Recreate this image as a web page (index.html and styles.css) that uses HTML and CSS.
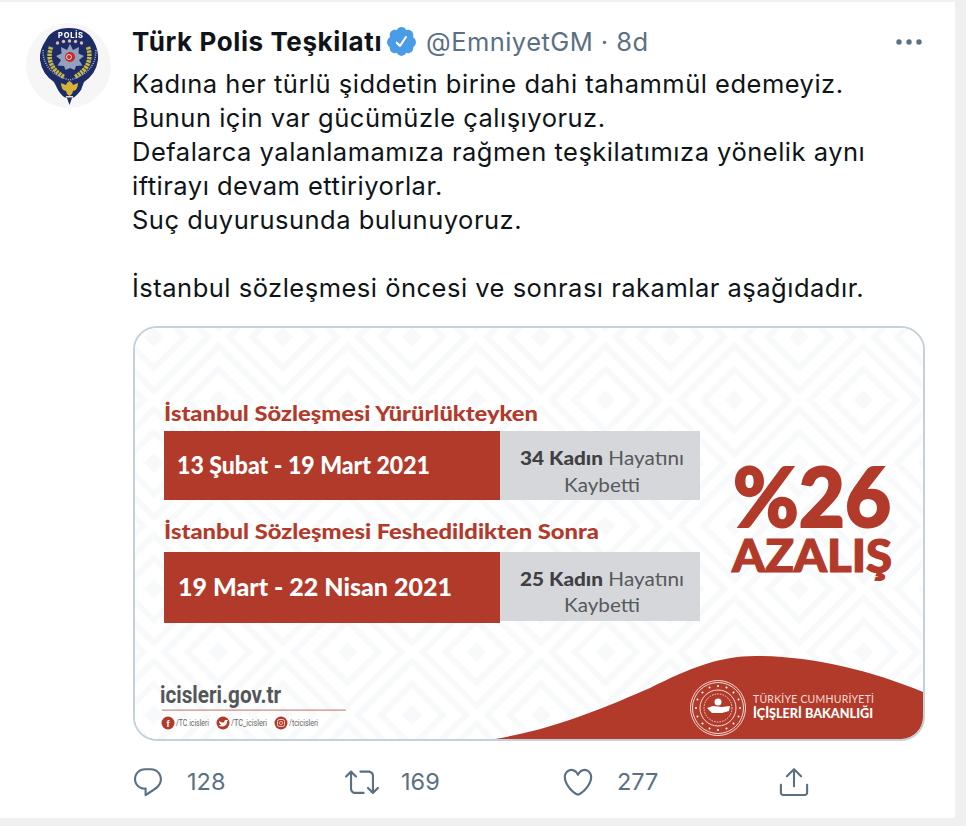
FILE: index.html
```html
<!DOCTYPE html>
<html lang="tr">
<head>
<meta charset="utf-8">
<title>Türk Polis Teşkilatı</title>
<link rel="stylesheet" href="styles.css">
</head>
<body>
<article class="tweet">
  <div class="avatar">
    <svg class="avatar-art" viewBox="26 23 85 85" aria-label="Polis arması">
      <circle cx="68.5" cy="65.5" r="42.5" fill="#f6f6f6"/>
      <path d="M46 40 Q52 28 69 28 Q86 28 93 40 Q99 50 98 60 Q96 74 84 82 L81 90 Q76 97 72 98 L69.500 105 L67 98 Q62 97 58 90 L54 82 Q42 74 40 60 Q39 50 46 40Z" fill="#1d2c66"/>
      <text class="badge-title" x="58" y="37.500" textLength="25" lengthAdjust="spacing">POLİS</text>
      <g fill="#e3b8b0"><circle cx="57.500" cy="43" r="1.700"/><circle cx="63.500" cy="41.500" r="1.700"/><circle cx="69.500" cy="41" r="1.700"/><circle cx="75.500" cy="41.500" r="1.700"/><circle cx="81.500" cy="43" r="1.700"/></g>
      <path d="M51 47 Q45 66 64 77" class="laurel"/>
      <path d="M88 47 Q94 66 75 77" class="laurel"/>
      <path d="M43 50 Q43 73 69.500 80 Q96 73 96 50" class="badge-ring"/>
      <path d="M70 44 L73 50 L79 47 L78.500 53.500 L84 56 L79 60 L82.500 65.500 L76 66 L74.500 70 L70 68 L65.500 70 L64 66 L57.500 65.500 L61 60 L56 56 L61.500 53.500 L61 47 L67 50Z" fill="#93a1bd"/>
      <circle cx="70" cy="57" r="5" fill="#c8262a"/>
      <circle cx="69" cy="57" r="2.500" fill="none" stroke="#fff" stroke-width=".8"/>
      <path d="M69.500 81 Q66 83 66 85 L61 83 Q61 90 66 91 L67 94 L69.500 96 L72 94 L73 91 Q78 90 78 83 L73 85 Q73 83 69.500 81Z" fill="#d6b23a"/>
      <rect x="66" y="96" width="7" height="1.500" fill="#e8e3c8"/>
    </svg>
  </div>
  <div class="content">
    <header class="head">
      <span class="name">Türk Polis Teşkilatı</span>
      <svg class="verified" viewBox="0 0 24 24"><path d="M22.5 12.5c0-1.58-.875-2.95-2.148-3.6.154-.435.238-.905.238-1.4 0-2.21-1.71-3.998-3.818-3.998-.47 0-.92.084-1.336.25C14.818 2.415 13.51 1.5 12 1.5s-2.816.917-3.437 2.25c-.415-.165-.866-.25-1.336-.25-2.11 0-3.818 1.79-3.818 4 0 .494.083.964.237 1.4-1.272.65-2.147 2.018-2.147 3.6 0 1.495.782 2.798 1.942 3.486-.02.17-.032.34-.032.514 0 2.21 1.708 4 3.818 4 .47 0 .92-.086 1.335-.25.62 1.334 1.926 2.25 3.437 2.25 1.512 0 2.818-.916 3.437-2.25.415.163.865.248 1.336.248 2.11 0 3.818-1.79 3.818-4 0-.174-.012-.344-.033-.513 1.158-.687 1.943-1.99 1.943-3.484zm-6.616-3.334l-4.334 6.5c-.145.217-.382.334-.625.334-.143 0-.288-.04-.416-.126l-.115-.094-2.415-2.415c-.293-.293-.293-.768 0-1.06s.768-.294 1.06 0l1.77 1.767 3.825-5.74c.23-.345.696-.436 1.04-.207.346.23.44.696.21 1.04z"/></svg>
      <span class="meta">@EmniyetGM · 8d</span>
      <svg class="more" viewBox="0 0 26 6"><circle cx="3" cy="3" r="2.7"/><circle cx="13" cy="3" r="2.7"/><circle cx="23" cy="3" r="2.7"/></svg>
    </header>
    <p class="text">Kadına her türlü şiddetin birine dahi tahammül edemeyiz.
Bunun için var gücümüzle çalışıyoruz.
Defalarca yalanlamamıza rağmen teşkilatımıza yönelik aynı
iftirayı devam ettiriyorlar.
Suç duyurusunda bulunuyoruz.

İstanbul sözleşmesi öncesi ve sonrası rakamlar aşağıdadır.</p>
    <figure class="media">
      <svg class="media-art" viewBox="135 328 788 411" role="img" aria-label="İstanbul Sözleşmesi öncesi ve sonrası rakamlar">
        <defs>
          <g id="dia">
            <path d="M0 -10 L10 0 L0 10 L-10 0Z" class="dia-fill"/>
            <path d="M0 -31 L31 0 L0 31 L-31 0Z" class="dia-line"/>
            <path d="M0 -54 L54 0 L0 54 L-54 0Z" class="dia-line"/>
          </g>
          <pattern id="lattice" x="89.5" y="22" width="129" height="126" patternUnits="userSpaceOnUse">
            <use href="#dia" x="0" y="0"/><use href="#dia" x="129" y="0"/><use href="#dia" x="0" y="126"/><use href="#dia" x="129" y="126"/><use href="#dia" x="64.5" y="63"/>
          </pattern>
        </defs>
        <rect x="135" y="328" width="788" height="411" fill="#fff"/>
        <rect x="135" y="328" width="788" height="411" fill="url(#lattice)"/>

        <text class="t-head" x="164" y="421" textLength="374" lengthAdjust="spacingAndGlyphs">İstanbul Sözleşmesi Yürürlükteyken</text>
        <rect class="red" x="164" y="431" width="336" height="69"/>
        <rect class="gray" x="500" y="431" width="200" height="69"/>
        <text class="t-date" x="177" y="474" textLength="253" lengthAdjust="spacingAndGlyphs">13 Şubat - 19 Mart 2021</text>
        <text class="t-gray" x="520" y="465" textLength="164" lengthAdjust="spacingAndGlyphs"><tspan class="strong">34 Kadın</tspan> Hayatını</text>
        <text class="t-gray" x="564" y="492" textLength="76" lengthAdjust="spacingAndGlyphs">Kaybetti</text>

        <text class="t-head" x="164" y="539" textLength="435" lengthAdjust="spacingAndGlyphs">İstanbul Sözleşmesi Feshedildikten Sonra</text>
        <rect class="red" x="164" y="552" width="336" height="71"/>
        <rect class="gray" x="500" y="552" width="200" height="69"/>
        <text class="t-date" x="178" y="596" textLength="274" lengthAdjust="spacingAndGlyphs">19 Mart - 22 Nisan 2021</text>
        <text class="t-gray" x="520" y="586" textLength="164" lengthAdjust="spacingAndGlyphs"><tspan class="strong">25 Kadın</tspan> Hayatını</text>
        <text class="t-gray" x="564" y="612" textLength="76" lengthAdjust="spacingAndGlyphs">Kaybetti</text>

        <text class="t-big" x="733" y="527" textLength="158" lengthAdjust="spacingAndGlyphs">%26</text>
        <text class="t-mid" x="732" y="572" textLength="160" lengthAdjust="spacingAndGlyphs">AZALIŞ</text>

        <text class="t-site" x="160" y="703" textLength="121" lengthAdjust="spacingAndGlyphs">icisleri.gov.tr</text>
        <rect x="162" y="709.5" width="184" height="1.2" fill="#c78a80"/>
        <circle class="red" cx="168" cy="723" r="6.5"/><text class="t-ico" x="168" y="726.5">f</text>
        <text class="t-soc" x="176" y="726" textLength="33" lengthAdjust="spacingAndGlyphs">/TC.icisleri</text>
        <circle class="red" cx="223" cy="723" r="6.5"/>
        <path d="M219 721 Q222 723 224 722.5 Q224 719.5 226.500 720 L228 720 L227 721.500 Q227 726 222.500 726.500 Q220 726.500 218.500 725.500 Q220.500 725.500 221 724.800 Q219 724 219 721Z" fill="#fff"/>
        <text class="t-soc" x="231" y="726" textLength="36" lengthAdjust="spacingAndGlyphs">/TC_icisleri</text>
        <circle class="red" cx="281" cy="723" r="6.5"/>
        <rect x="277.500" y="719.500" width="7" height="7" rx="2" fill="none" stroke="#f2d4cf" stroke-width="1"/><circle cx="281" cy="723" r="1.600" fill="none" stroke="#f2d4cf" stroke-width=".8"/>
        <text class="t-soc" x="289" y="726" textLength="29" lengthAdjust="spacingAndGlyphs">/tcicisleri</text>

        <path class="red" d="M495 739 C560 728 610 705 650 688 C690 668 720 656 755 656 C810 656 870 670 923 692 V739Z"/>
        <g class="seal">
          <circle cx="718" cy="708" r="27.500"/>
          <circle cx="718" cy="708" r="25.500"/>
          <circle cx="718" cy="708" r="18"/>
          <circle cx="718" cy="708" r="14" stroke-dasharray="1.500 1.200" stroke-width="2"/>
        </g>
        <g fill="#fff">
          <circle cx="718" cy="702" r="3.500"/>
          <path d="M707 708 L713 706 L722 707 L730 706 L729 711 L722 713 L712 713Z"/>
          <g><circle cx="718" cy="686" r="1"/><circle cx="718" cy="730" r="1"/><circle cx="696" cy="708" r="1"/><circle cx="740" cy="708" r="1"/><circle cx="702.500" cy="692.500" r="1"/><circle cx="733.500" cy="692.500" r="1"/><circle cx="702.500" cy="723.500" r="1"/><circle cx="733.500" cy="723.500" r="1"/><circle cx="709.500" cy="687.500" r="1"/><circle cx="726.500" cy="687.500" r="1"/><circle cx="709.500" cy="728.500" r="1"/><circle cx="726.500" cy="728.500" r="1"/><circle cx="697.500" cy="699.500" r="1"/><circle cx="738.500" cy="699.500" r="1"/><circle cx="697.500" cy="716.500" r="1"/><circle cx="738.500" cy="716.500" r="1"/></g>
        </g>
        <text class="t-min1" x="753" y="703" textLength="121">TÜRKİYE CUMHURİYETİ</text>
        <text class="t-min2" x="753" y="718" textLength="120" lengthAdjust="spacingAndGlyphs">İÇİŞLERİ BAKANLIĞI</text>
      </svg>
    </figure>
    <footer class="actions">
      <div class="action">
        <svg class="act-icon" viewBox="0 0 24 24"><path d="M14.046 2.242l-4.148-.01h-.002c-4.374 0-7.8 3.427-7.8 7.802 0 4.098 3.186 7.206 7.465 7.37v3.828c0 .108.044.286.12.403.142.225.384.347.632.347.138 0 .277-.038.402-.118.264-.168 6.473-4.14 8.088-5.506 1.902-1.61 3.04-3.97 3.043-6.312v-.017c-.006-4.367-3.43-7.787-7.8-7.788zm3.787 12.972c-1.134.96-4.862 3.405-6.772 4.643V16.67c0-.414-.335-.75-.75-.75h-.396c-3.66 0-6.318-2.476-6.318-5.886 0-3.534 2.768-6.302 6.3-6.302l4.147.01h.002c3.532 0 6.3 2.766 6.302 6.296-.003 1.91-.942 3.844-2.514 5.176z"/></svg>
        <span class="count">128</span>
      </div>
      <div class="action">
        <svg class="act-icon" viewBox="0 0 24 24"><path d="M23.77 15.67c-.292-.293-.767-.293-1.06 0l-2.22 2.22V7.65c0-2.068-1.683-3.75-3.75-3.75h-5.85c-.414 0-.75.336-.75.75s.336.75.75.75h5.85c1.24 0 2.25 1.01 2.25 2.25v10.24l-2.22-2.22c-.293-.293-.768-.293-1.06 0s-.294.768 0 1.06l3.5 3.5c.145.147.337.22.53.22s.383-.072.53-.22l3.5-3.5c.294-.292.294-.767 0-1.06zm-10.66 3.28H7.26c-1.24 0-2.25-1.01-2.25-2.25V6.46l2.22 2.22c.148.147.34.22.532.22s.384-.073.53-.22c.293-.293.293-.768 0-1.06l-3.5-3.5c-.293-.294-.768-.294-1.06 0l-3.5 3.5c-.294.292-.294.767 0 1.06s.767.293 1.06 0l2.22-2.22V16.7c0 2.068 1.683 3.75 3.75 3.75h5.85c.414 0 .75-.336.75-.75s-.337-.75-.75-.75z"/></svg>
        <span class="count">169</span>
      </div>
      <div class="action">
        <svg class="act-icon" viewBox="0 0 24 24"><path d="M12 21.638h-.014C9.403 21.59 1.95 14.856 1.95 8.478c0-3.064 2.525-5.754 5.403-5.754 2.29 0 3.83 1.58 4.646 2.73.814-1.148 2.354-2.73 4.645-2.73 2.88 0 5.404 2.69 5.404 5.755 0 6.376-7.454 13.11-10.037 13.157H12zM7.354 4.225c-2.08 0-3.903 1.988-3.903 4.255 0 5.74 7.034 11.596 8.55 11.658 1.518-.062 8.55-5.917 8.55-11.658 0-2.267-1.823-4.255-3.903-4.255-2.528 0-3.94 2.936-3.952 2.965-.23.562-1.156.562-1.387 0-.014-.03-1.425-2.965-3.954-2.965z"/></svg>
        <span class="count">277</span>
      </div>
      <div class="action">
        <svg class="act-icon" viewBox="0 0 24 24"><path d="M17.53 7.47l-5-5c-.293-.293-.768-.293-1.06 0l-5 5c-.294.293-.294.768 0 1.06s.767.294 1.06 0l3.72-3.72V15c0 .414.336.75.75.75s.75-.336.75-.75V4.81l3.72 3.72c.146.147.338.22.53.22s.384-.072.53-.22c.293-.293.293-.767 0-1.06z"/><path d="M19.708 21.944H4.292C3.028 21.944 2 20.916 2 19.652V14c0-.414.336-.75.75-.75s.75.336.75.75v5.652c0 .437.355.792.792.792h15.416c.437 0 .792-.355.792-.792V14c0-.414.336-.75.75-.75s.75.336.75.75v5.652c0 1.264-1.028 2.292-2.292 2.292z"/></svg>
      </div>
    </footer>
  </div>
</article>
</body>
</html>
```

FILE: styles.css
```css
html, body {
  margin: 0;
  padding: 0;
  background: #f0f0f0;
}
body {
  height: 826px;
  overflow: hidden;
  padding-top: 2px;
  box-sizing: border-box;
  font-family: Inter, "Liberation Sans", sans-serif;
}
.tweet {
  box-sizing: border-box;
  width: 955px;
  height: 816px;
  background: #fff;
  display: flex;
  gap: 21px;
  padding: 21px 30px 0 26px;
}
.avatar {
  flex: none;
  width: 85px;
  height: 85px;
}
.avatar-art {
  display: block;
  width: 85px;
  height: 85px;
  filter: blur(.4px);
}
.badge-title {
  font: 800 7.5px Inter, sans-serif;
  fill: #fff;
}
.laurel {
  fill: none;
  stroke: #c9b83e;
  stroke-width: 4.5;
  stroke-dasharray: 2.500 .8;
}
.badge-ring {
  fill: none;
  stroke: #aeb7d0;
  stroke-width: 1.500;
  stroke-dasharray: 1 1.200;
}
.content {
  flex: 1;
  min-width: 0;
}
.head {
  display: flex;
  align-items: center;
  height: 36px;
  margin-bottom: 8px;
  white-space: nowrap;
}
.name {
  font-size: 26px;
  font-weight: 700;
  letter-spacing: .6px;
  color: #0f1419;
}
.verified {
  width: 33px;
  height: 33px;
  margin-left: 3px;
  fill: #4a9be8;
  flex: none;
}
.meta {
  margin-left: 8px;
  font-size: 25.5px;
  letter-spacing: .45px;
  color: #5b7083;
}
.more {
  margin: 2px 3px 0 auto;
  width: 26px;
  height: 6px;
  fill: #5b7083;
  flex: none;
}
.text {
  margin: 0;
  font-size: 25.5px;
  letter-spacing: .5px;
  line-height: 34px;
  color: #0f1419;
  white-space: pre-wrap;
}
.media {
  box-sizing: border-box;
  width: 792px;
  height: 415px;
  margin: 21px 0 0 1px;
  border: 2px solid #c4d0da;
  border-radius: 24px;
  overflow: hidden;
}
.media-art {
  display: block;
  width: 788px;
  height: 411px;
}
.dia-fill {
  fill: #f8f9fa;
}
.dia-line {
  fill: none;
  stroke: #f8f9fa;
  stroke-width: 6;
}
.red {
  fill: #b23a2a;
}
.gray {
  fill: #d5d7da;
}
.t-head {
  font: 900 21px Lato, sans-serif;
  fill: #b23a2a;
}
.t-date {
  font: 900 24px Lato, sans-serif;
  fill: #fff;
}
.t-gray {
  font: 400 19.5px Lato, sans-serif;
  fill: #58595b;
}
.strong {
  font-weight: 900;
  fill: #3f4043;
}
.t-big {
  font: 900 82px Lato, sans-serif;
  fill: #b23a2a;
  stroke: #b23a2a;
  stroke-width: 2;
}
.t-mid {
  font: 900 46px Lato, sans-serif;
  fill: #b23a2a;
  stroke: #b23a2a;
  stroke-width: 1.200;
}
.t-site {
  font: 700 24px Roboto, sans-serif;
  fill: #55565a;
}
.t-soc {
  font: 400 8.5px Roboto, sans-serif;
  fill: #666;
}
.t-ico {
  font: 700 9px "Liberation Sans", sans-serif;
  fill: #fff;
  text-anchor: middle;
}
.seal circle {
  fill: none;
  stroke: #f3dcd8;
  stroke-width: 1;
}
.t-min1 {
  font: 400 10.5px Lato, sans-serif;
  fill: #f3dcd8;
}
.t-min2 {
  font: 900 12.5px Lato, sans-serif;
  fill: #fff;
}
.actions {
  display: grid;
  grid-template-columns: 214px 216px 216px auto;
  margin: 24px 0 0 -1px;
  width: 800px;
}
.action {
  display: flex;
  align-items: center;
  gap: 22px;
}
.act-icon {
  width: 34px;
  height: 34px;
  fill: #5b7083;
  flex: none;
}
.count {
  margin-bottom: 2px;
  font-size: 23.5px;
  color: #5b7083;
}
```
